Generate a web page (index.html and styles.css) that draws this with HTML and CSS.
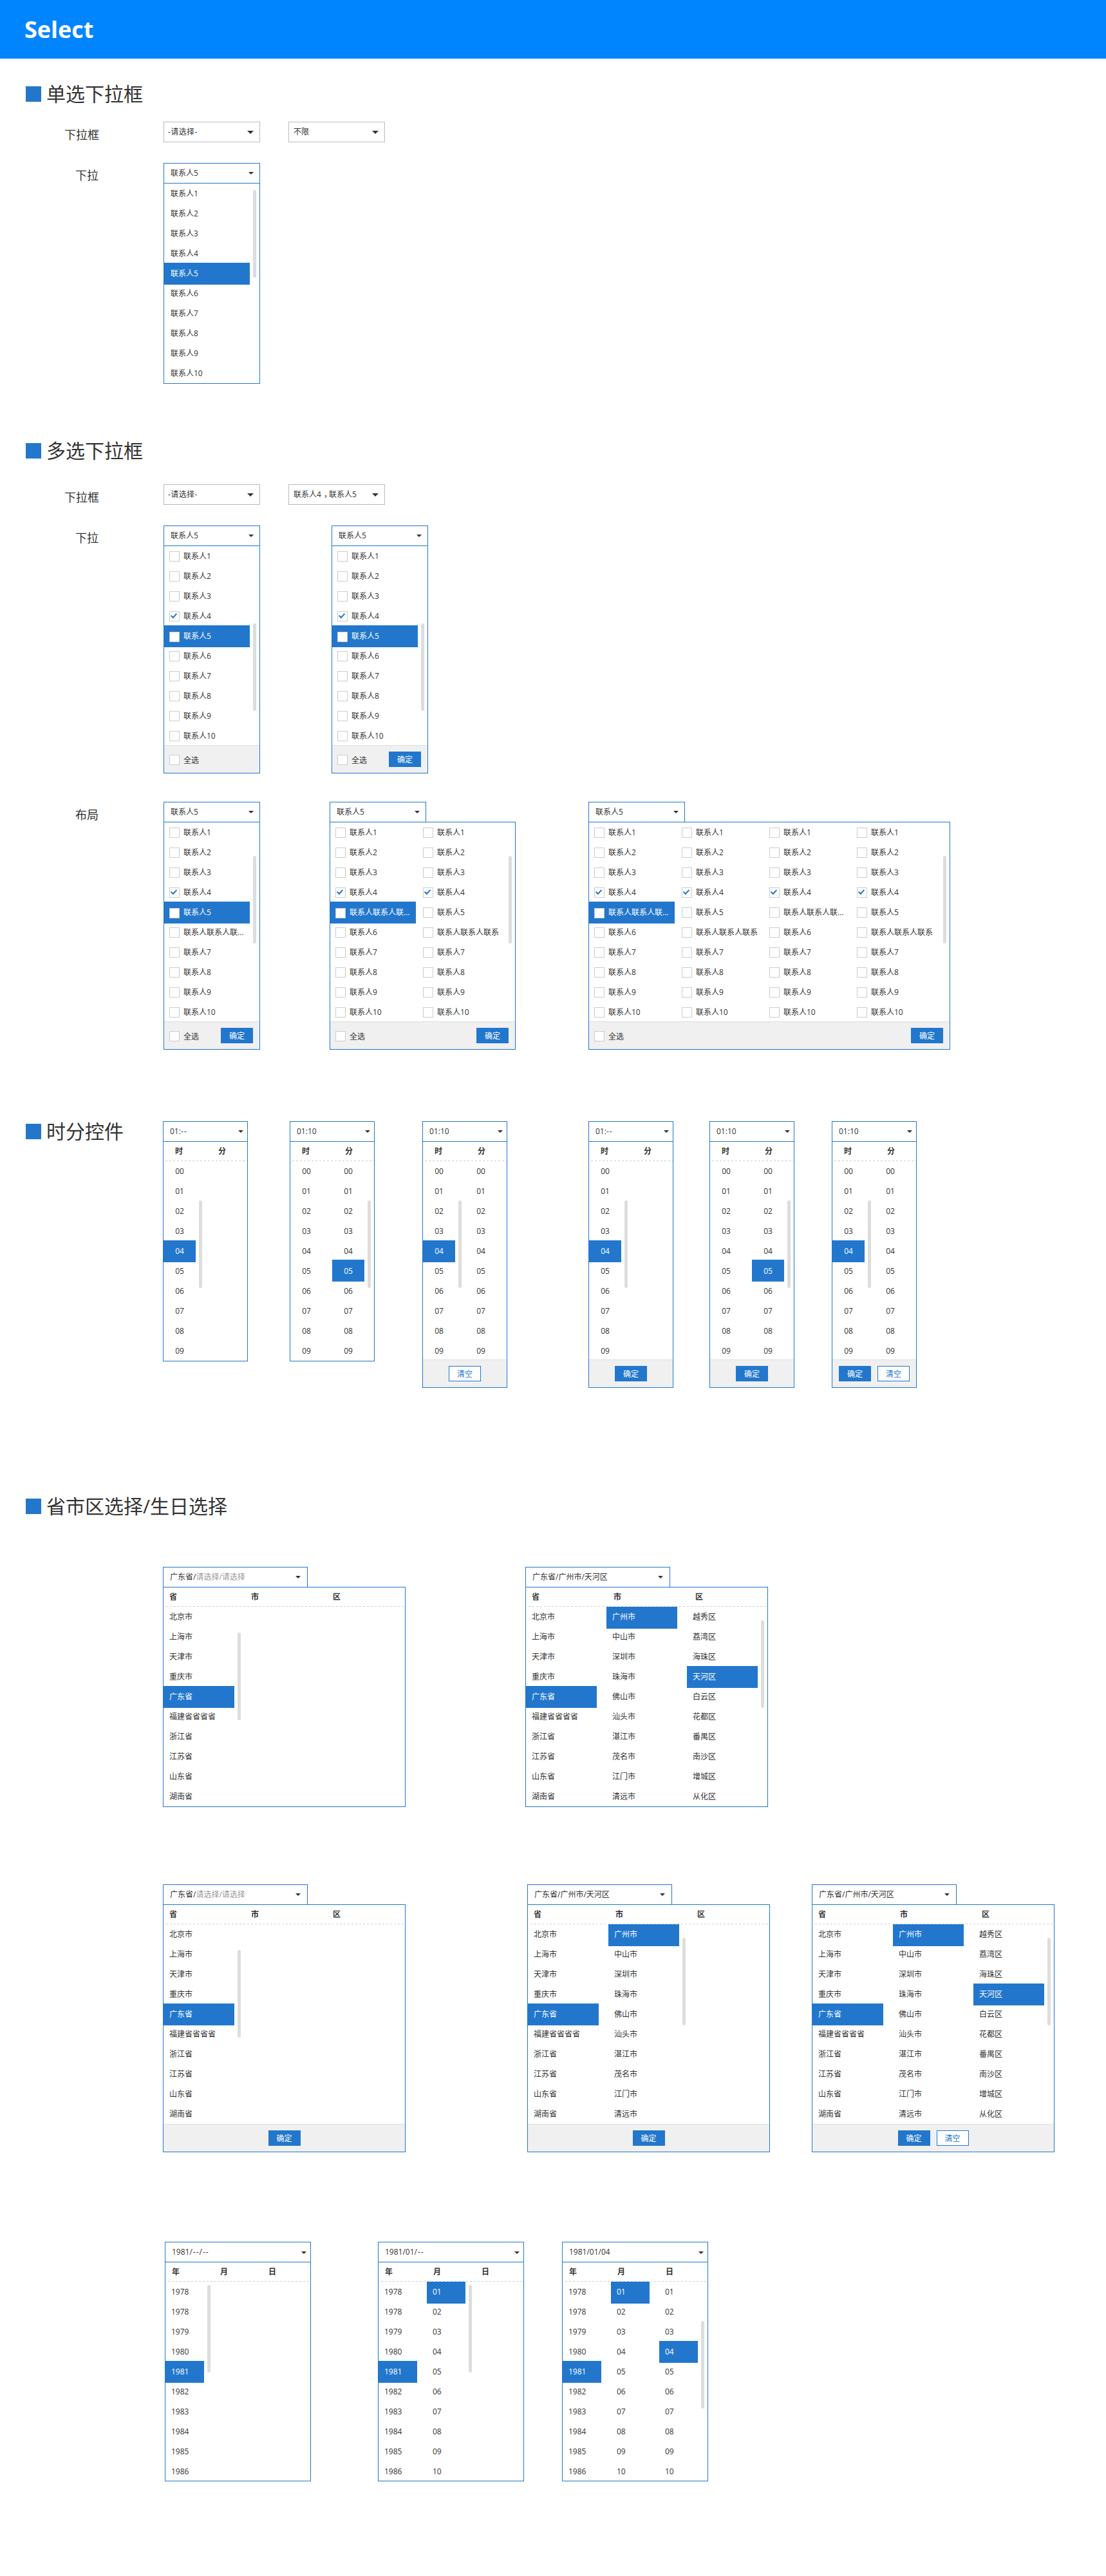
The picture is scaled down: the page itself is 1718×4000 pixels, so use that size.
FILE: index.html
```html
<!DOCTYPE html>
<html lang="zh-CN">
<head>
<meta charset="utf-8">
<title>Select</title>
<link rel="stylesheet" href="styles.css">
</head>
<body>
<svg class="sprite" aria-hidden="true"><symbol id="tick" viewBox="0 0 14 14"><path d="M2.6 6.8 5.9 10 11.4 3.8" fill="none" stroke="#2277cc" stroke-width="2"/></symbol></svg>
<header class="banner"><h1>Select</h1></header>

<section class="single">
<h2>单选下拉框</h2>
<div class="row row--fields">
<span class="label">下拉框</span>
<div class="select select--empty">-请选择-<i class="caret"></i></div>
<div class="select select--high">不限<i class="caret"></i></div>
</div>
<div class="row row--menus">
<span class="label">下拉</span>
<div class="picker list">
<div class="head">联系人5<i class="caret"></i></div>
<div class="panel"><div class="cols">
<ul><li>联系人1<li>联系人2<li>联系人3<li>联系人4<li class="on">联系人5<li>联系人6<li>联系人7<li>联系人8<li>联系人9<li>联系人10</ul>
<i class="bar bar--list"></i></div></div>
</div>
</div>
</section>

<section class="multi">
<h2>多选下拉框</h2>
<div class="row row--fields">
<span class="label">下拉框</span>
<div class="select select--empty">-请选择-<i class="caret"></i></div>
<div class="select select--high"><span>联系人4<span class="comma">，</span>联系人5</span><i class="caret"></i></div>
</div>
<div class="row row--menus">
<span class="label">下拉</span>
<div class="picker list checks">
<div class="head">联系人5<i class="caret"></i></div>
<div class="panel"><div class="cols">
<ul><li>联系人1<li>联系人2<li>联系人3<li><svg class="tick"><use href="#tick"/></svg>联系人4<li class="on">联系人5<li>联系人6<li>联系人7<li>联系人8<li>联系人9<li>联系人10</ul>
<i class="bar bar--low"></i></div>
<div class="foot"><span class="all">全选</span></div></div>
</div>
<div class="picker list checks">
<div class="head">联系人5<i class="caret"></i></div>
<div class="panel"><div class="cols">
<ul><li>联系人1<li>联系人2<li>联系人3<li><svg class="tick"><use href="#tick"/></svg>联系人4<li class="on">联系人5<li>联系人6<li>联系人7<li>联系人8<li>联系人9<li>联系人10</ul>
<i class="bar bar--low"></i></div>
<div class="foot"><span class="all">全选</span><button class="ok">确定</button></div></div>
</div>
</div>
<div class="row row--layouts">
<span class="label">布局</span>
<div class="picker list checks">
<div class="head">联系人5<i class="caret"></i></div>
<div class="panel"><div class="cols">
<ul><li>联系人1<li>联系人2<li>联系人3<li><svg class="tick"><use href="#tick"/></svg>联系人4<li class="on">联系人5<li>联系人联系人联...<li>联系人7<li>联系人8<li>联系人9<li>联系人10</ul>
<i class="bar bar--mid"></i></div>
<div class="foot"><span class="all">全选</span><button class="ok">确定</button></div></div>
</div>
<div class="picker list checks checks--two">
<div class="head">联系人5<i class="caret"></i></div>
<div class="panel"><div class="cols">
<ul><li>联系人1<li>联系人2<li>联系人3<li><svg class="tick"><use href="#tick"/></svg>联系人4<li class="on">联系人联系人联...<li>联系人6<li>联系人7<li>联系人8<li>联系人9<li>联系人10</ul>
<ul><li>联系人1<li>联系人2<li>联系人3<li><svg class="tick"><use href="#tick"/></svg>联系人4<li>联系人5<li>联系人联系人联系<li>联系人7<li>联系人8<li>联系人9<li>联系人10</ul>
<i class="bar bar--mid"></i></div>
<div class="foot"><span class="all">全选</span><button class="ok">确定</button></div></div>
</div>
<div class="picker list checks checks--four">
<div class="head">联系人5<i class="caret"></i></div>
<div class="panel"><div class="cols">
<ul><li>联系人1<li>联系人2<li>联系人3<li><svg class="tick"><use href="#tick"/></svg>联系人4<li class="on">联系人联系人联...<li>联系人6<li>联系人7<li>联系人8<li>联系人9<li>联系人10</ul>
<ul><li>联系人1<li>联系人2<li>联系人3<li><svg class="tick"><use href="#tick"/></svg>联系人4<li>联系人5<li>联系人联系人联系<li>联系人7<li>联系人8<li>联系人9<li>联系人10</ul>
<ul><li>联系人1<li>联系人2<li>联系人3<li><svg class="tick"><use href="#tick"/></svg>联系人4<li>联系人联系人联...<li>联系人6<li>联系人7<li>联系人8<li>联系人9<li>联系人10</ul>
<ul><li>联系人1<li>联系人2<li>联系人3<li><svg class="tick"><use href="#tick"/></svg>联系人4<li>联系人5<li>联系人联系人联系<li>联系人7<li>联系人8<li>联系人9<li>联系人10</ul>
<i class="bar bar--mid"></i></div>
<div class="foot"><span class="all">全选</span><button class="ok">确定</button></div></div>
</div>
</div>
</section>

<section class="times">
<div class="row row--times">
<h2>时分控件</h2>
<div class="picker time">
<div class="head">01:<span class="dashes">--</span><i class="caret"></i></div>
<div class="panel"><div class="titles"><b>时</b><b>分</b></div><div class="cols">
<ul><li>00<li>01<li>02<li>03<li class="on">04<li>05<li>06<li>07<li>08<li>09</ul>
<i class="bar bar--first"></i></div></div>
</div>
<div class="picker time">
<div class="head">01:10<i class="caret"></i></div>
<div class="panel"><div class="titles"><b>时</b><b>分</b></div><div class="cols">
<ul><li>00<li>01<li>02<li>03<li>04<li>05<li>06<li>07<li>08<li>09</ul>
<ul><li>00<li>01<li>02<li>03<li>04<li class="on on--raised">05<li>06<li>07<li>08<li>09</ul>
<i class="bar bar--second"></i></div></div>
</div>
<div class="picker time has-foot">
<div class="head">01:10<i class="caret"></i></div>
<div class="panel"><div class="titles"><b>时</b><b>分</b></div><div class="cols">
<ul><li>00<li>01<li>02<li>03<li class="on">04<li>05<li>06<li>07<li>08<li>09</ul>
<ul><li>00<li>01<li>02<li>03<li>04<li>05<li>06<li>07<li>08<li>09</ul>
<i class="bar bar--first"></i></div>
<div class="foot"><button class="clear">清空</button></div></div>
</div>
<div class="picker time has-foot">
<div class="head">01:<span class="dashes">--</span><i class="caret"></i></div>
<div class="panel"><div class="titles"><b>时</b><b>分</b></div><div class="cols">
<ul><li>00<li>01<li>02<li>03<li class="on">04<li>05<li>06<li>07<li>08<li>09</ul>
<i class="bar bar--first"></i></div>
<div class="foot"><button class="ok">确定</button></div></div>
</div>
<div class="picker time has-foot">
<div class="head">01:10<i class="caret"></i></div>
<div class="panel"><div class="titles"><b>时</b><b>分</b></div><div class="cols">
<ul><li>00<li>01<li>02<li>03<li>04<li>05<li>06<li>07<li>08<li>09</ul>
<ul><li>00<li>01<li>02<li>03<li>04<li class="on on--raised">05<li>06<li>07<li>08<li>09</ul>
<i class="bar bar--second"></i></div>
<div class="foot"><button class="ok">确定</button></div></div>
</div>
<div class="picker time has-foot">
<div class="head">01:10<i class="caret"></i></div>
<div class="panel"><div class="titles"><b>时</b><b>分</b></div><div class="cols">
<ul><li>00<li>01<li>02<li>03<li class="on">04<li>05<li>06<li>07<li>08<li>09</ul>
<ul><li>00<li>01<li>02<li>03<li>04<li>05<li>06<li>07<li>08<li>09</ul>
<i class="bar bar--first"></i></div>
<div class="foot"><button class="ok">确定</button><button class="clear">清空</button></div></div>
</div>
</div>
</section>

<section class="regions">
<h2>省市区选择/生日选择</h2>
<div class="row row--region-plain">
<div class="picker region">
<div class="head">广东省/<span class="hint">请选择/请选择</span><i class="caret"></i></div>
<div class="panel"><div class="titles"><b>省</b><b>市</b><b>区</b></div><div class="cols">
<ul><li>北京市<li>上海市<li>天津市<li>重庆市<li class="on">广东省<li>福建省省省省<li>浙江省<li>江苏省<li>山东省<li>湖南省</ul>
<i class="bar bar--first"></i></div></div>
</div>
<div class="picker region">
<div class="head">广东省/广州市/天河区<i class="caret"></i></div>
<div class="panel"><div class="titles"><b>省</b><b>市</b><b>区</b></div><div class="cols">
<ul><li>北京市<li>上海市<li>天津市<li>重庆市<li class="on">广东省<li>福建省省省省<li>浙江省<li>江苏省<li>山东省<li>湖南省</ul>
<ul><li class="on on--top">广州市<li>中山市<li>深圳市<li>珠海市<li>佛山市<li>汕头市<li>湛江市<li>茂名市<li>江门市<li>清远市</ul>
<ul><li>越秀区<li>荔湾区<li>海珠区<li class="on">天河区<li>白云区<li>花都区<li>番禺区<li>南沙区<li>增城区<li>从化区</ul>
<i class="bar bar--third"></i></div></div>
</div>
</div>
<div class="row row--region-foot">
<div class="picker region">
<div class="head">广东省/<span class="hint">请选择/请选择</span><i class="caret"></i></div>
<div class="panel"><div class="titles"><b>省</b><b>市</b><b>区</b></div><div class="cols">
<ul><li>北京市<li>上海市<li>天津市<li>重庆市<li class="on">广东省<li>福建省省省省<li>浙江省<li>江苏省<li>山东省<li>湖南省</ul>
<i class="bar bar--first"></i></div>
<div class="foot"><button class="ok">确定</button></div></div>
</div>
<div class="picker region">
<div class="head">广东省/广州市/天河区<i class="caret"></i></div>
<div class="panel"><div class="titles"><b>省</b><b>市</b><b>区</b></div><div class="cols">
<ul><li>北京市<li>上海市<li>天津市<li>重庆市<li class="on">广东省<li>福建省省省省<li>浙江省<li>江苏省<li>山东省<li>湖南省</ul>
<ul><li class="on on--top">广州市<li>中山市<li>深圳市<li>珠海市<li>佛山市<li>汕头市<li>湛江市<li>茂名市<li>江门市<li>清远市</ul>
<i class="bar bar--second"></i></div>
<div class="foot"><button class="ok">确定</button></div></div>
</div>
<div class="picker region">
<div class="head">广东省/广州市/天河区<i class="caret"></i></div>
<div class="panel"><div class="titles"><b>省</b><b>市</b><b>区</b></div><div class="cols">
<ul><li>北京市<li>上海市<li>天津市<li>重庆市<li class="on">广东省<li>福建省省省省<li>浙江省<li>江苏省<li>山东省<li>湖南省</ul>
<ul><li class="on on--top">广州市<li>中山市<li>深圳市<li>珠海市<li>佛山市<li>汕头市<li>湛江市<li>茂名市<li>江门市<li>清远市</ul>
<ul><li>越秀区<li>荔湾区<li>海珠区<li class="on">天河区<li>白云区<li>花都区<li>番禺区<li>南沙区<li>增城区<li>从化区</ul>
<i class="bar bar--third"></i></div>
<div class="foot"><button class="ok">确定</button><button class="clear">清空</button></div></div>
</div>
</div>
<div class="row row--birthday">
<div class="picker birthday">
<div class="head">1981<span class="dashes">/--/--</span><i class="caret"></i></div>
<div class="panel"><div class="titles"><b>年</b><b>月</b><b>日</b></div><div class="cols">
<ul><li>1978<li>1978<li>1979<li>1980<li class="on">1981<li>1982<li>1983<li>1984<li>1985<li>1986</ul>
<i class="bar bar--first"></i></div></div>
</div>
<div class="picker birthday">
<div class="head">1981/01<span class="dashes">/--</span><i class="caret"></i></div>
<div class="panel"><div class="titles"><b>年</b><b>月</b><b>日</b></div><div class="cols">
<ul><li>1978<li>1978<li>1979<li>1980<li class="on">1981<li>1982<li>1983<li>1984<li>1985<li>1986</ul>
<ul><li class="on on--top">01<li>02<li>03<li>04<li>05<li>06<li>07<li>08<li>09<li>10</ul>
<i class="bar bar--second"></i></div></div>
</div>
<div class="picker birthday">
<div class="head">1981/01/04<i class="caret"></i></div>
<div class="panel"><div class="titles"><b>年</b><b>月</b><b>日</b></div><div class="cols">
<ul><li>1978<li>1978<li>1979<li>1980<li class="on">1981<li>1982<li>1983<li>1984<li>1985<li>1986</ul>
<ul><li class="on on--top">01<li>02<li>03<li>04<li>05<li>06<li>07<li>08<li>09<li>10</ul>
<ul><li>01<li>02<li>03<li class="on">04<li>05<li>06<li>07<li>08<li>09<li>10</ul>
<i class="bar bar--third"></i></div></div>
</div>
</div>
</section>
</body>
</html>
```
FILE: styles.css
```css
* { box-sizing: border-box; margin: 0; padding: 0; }

:root {
  --blue: #2277cc;
  --text: #333;
}

body {
  width: 1718px;
  min-height: 4000px;
  background: #fff;
  color: var(--text);
  font: 12px/30px "Open Sans", "Noto Sans CJK SC", sans-serif;
}

ul { list-style: none; }

.sprite { display: block; width: 0; height: 0; }

/* Page header and section titles */
.banner {
  height: 91px;
  padding-left: 38px;
  background: #0085ff;
}
.banner h1 {
  color: #fff;
  font-size: 36px;
  line-height: 91px;
}

h2 {
  display: flex;
  align-items: center;
  gap: 8px;
  height: 30px;
  padding-left: 40px;
  font-size: 30px;
  font-weight: 400;
  white-space: nowrap;
}
h2::before {
  content: "";
  width: 24px;
  height: 24px;
  background: var(--blue);
}

.single { padding-top: 40px; }
.multi { padding-top: 89px; }
.times { padding-top: 111px; }
.regions { padding-top: 169px; }

/* Rows of samples */
.row { display: grid; align-items: start; justify-items: start; }
.row--fields { grid-template-columns: 254px 194px auto; height: 32px; }
.row--menus { grid-template-columns: 254px 261px auto; margin-top: 32px; }
.row--layouts { grid-template-columns: 254px 258px 402px auto; margin-top: 44px; }
.row--times { grid-template-columns: 253px 197px 206px 258px 188px 190px auto; }
.row--region-plain { grid-template-columns: 563px auto; margin-top: 79px; padding-left: 253px; }
.row--region-foot { grid-template-columns: 566px 442px auto; margin-top: 120px; padding-left: 253px; }
.row--birthday { grid-template-columns: 331px 286px auto; margin-top: 139px; padding-left: 256px; }
.single .row--fields { margin-top: 28px; }
.multi .row--fields { margin-top: 37px; }
.row--times h2 { margin-top: 1px; }

.label {
  width: 153px;
  font-size: 18px;
  line-height: 40px;
  text-align: right;
}
.row--fields .label { width: 154px; }
.row--menus .label { line-height: 38px; }

/* Closed select */
.select {
  display: flex;
  align-items: center;
  width: 150px;
  height: 32px;
  padding: 0 9px 0 7px;
  border: 1px solid #bbb;
}
.select--high { line-height: 28px; }
.select--empty { padding-left: 6px; letter-spacing: 0.4px; }
.select .caret { border-width: 5px 5px 0; }
.comma { position: relative; left: 4px; }

.caret {
  margin-left: auto;
  border: solid transparent;
  border-width: 4px 4px 0;
  border-top-color: var(--text);
}

/* Open picker */
.head {
  display: flex;
  align-items: center;
  height: 31px;
  padding: 0 9px 0 10px;
  border: 1px solid var(--blue);
  border-bottom: 0;
}
.hint { color: #999; }
.dashes { letter-spacing: 1px; }
.panel { border: 1px solid var(--blue); }

.titles {
  display: grid;
  position: relative;
  height: 30px;
}
.titles::after {
  content: "";
  position: absolute;
  right: 1px;
  bottom: 0;
  left: 4px;
  height: 1px;
  background: repeating-linear-gradient(90deg, #ccc 0 3px, transparent 3px 6px);
}

.cols {
  display: grid;
  position: relative;
  justify-content: start;
  height: 310px;
}
.cols li { height: 31px; line-height: 31px; position: relative; white-space: nowrap; }
.cols li.on {
  --rise: 1px;
  z-index: 1;
  height: 34px;
  margin-top: calc(-1 * var(--rise));
  margin-bottom: calc(var(--rise) - 3px);
  padding-top: var(--rise);
  background: var(--blue);
  color: #fff;
}
.cols li.on--top { --rise: 0px; }
.cols li.on--raised { --rise: 2px; }

.bar {
  position: absolute;
  width: 5px;
  height: 136px;
  border-radius: 3px;
  background: #ddd;
}

.foot {
  display: flex;
  position: relative;
  z-index: 2;
  justify-content: center;
  gap: 10px;
  height: 43px;
  padding-top: 9px;
  border-top: 1px solid #ddd;
  background: #f0f0f0;
}
button {
  width: 50px;
  height: 24px;
  border: 1px solid var(--blue);
  font: inherit;
  line-height: 21px;
}
.ok { background: var(--blue); color: #fff; }
.clear { background: #fff; color: var(--blue); }

/* Contact lists */
.list { width: 150px; }
.list .cols { grid-auto-flow: column; grid-auto-columns: 136px; }
.list li { width: 133px; padding-left: 10px; }
.list .bar { right: 5px; }
.bar--list { top: 10px; }
.bar--low { top: 120px; }
.bar--mid { top: 52px; }

.checks .cols { height: 309px; }
.checks li { padding-left: 30px; }
.checks li::before,
.all::before {
  content: "";
  position: absolute;
  top: 8px;
  left: 8px;
  width: 14px;
  height: 14px;
  border: 1px solid #ccc;
  background: #fff;
}
.checks li.on::before { top: 10px; }
.tick { position: absolute; top: 8px; left: 8px; width: 14px; height: 14px; }
.checks .foot { justify-content: space-between; padding-right: 10px; }
.all { position: relative; padding-left: 30px; line-height: 27px; }
.all::before { top: 5px; }
.checks--two, .checks--four { width: auto; }
.checks--two .head, .checks--four .head { width: 150px; }
.checks--two .panel { width: 289px; }
.checks--four .panel { width: 562px; }

/* Hour and minute */
.time { width: 132px; }
.time .head { padding-right: 6px; }
.time .titles { grid-template-columns: 67px 40px; padding-left: 18px; }
.time .titles::after { right: 0; left: 3px; }
.time .cols { grid-template-columns: 65px 65px; }
.time li { width: 50px; text-align: center; }
.time .bar { top: 61px; }
.time .bar--first { left: 55px; }
.time .bar--second { left: 120px; }
.time.has-foot .cols { height: 308px; }

/* Province, city, district */
.region { width: 377px; }
.region .head { width: 225px; padding-right: 10px; }
.region .titles { grid-template-columns: 127px 127px 60px; padding-left: 9px; }
.region .cols { grid-template-columns: 125px 125px 125px; }
.region li { width: 110px; padding-left: 9px; }
.region .bar { top: 21px; }
.region .bar--first { top: 40px; left: 115px; }
.region .bar--second { left: 240px; }
.region .bar--third { left: 365px; }

/* Birthday */
.birthday { width: 227px; }
.birthday .head { padding-right: 6px; }
.birthday .head .caret { position: relative; top: 1px; }
.birthday .titles { grid-template-columns: 75px 75px 60px; padding-left: 10px; }
.birthday .cols { grid-template-columns: 75px 75px 75px; height: 309px; }
.birthday li { width: 60px; padding-left: 9px; }
.birthday .bar { top: 5px; }
.birthday .bar--first { left: 65px; }
.birthday .bar--second { left: 140px; }
.birthday .bar--third { top: 61px; left: 215px; }
```
